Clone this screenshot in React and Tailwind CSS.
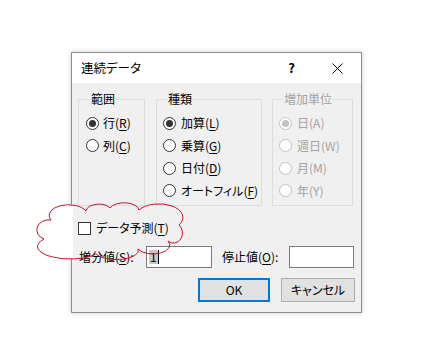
import React from 'react';

const font = { fontFamily: '"Noto Sans CJK JP", "Noto Sans", sans-serif' };

const Radio = ({ checked, disabled }) => (
  <span
    className={`w-[13px] h-[13px] shrink-0 rounded-full border flex items-center justify-center bg-white ${
      disabled ? 'border-[#c2c2c2]' : 'border-[#333333]'
    }`}
  >
    {checked && (
      <span className={`w-[7px] h-[7px] rounded-full ${disabled ? 'bg-[#c2c2c2]' : 'bg-[#333333]'}`} />
    )}
  </span>
);

const Option = ({ label, keyChar, checked, disabled, gap = 'gap-[4px]' }) => (
  <div className={`h-[22.5px] flex items-center whitespace-nowrap ${gap}`}>
    <Radio checked={checked} disabled={disabled} />
    <span className={disabled ? 'text-[#a3a3a3]' : 'text-black'}>
      {label}(
      {disabled ? keyChar : <span className="underline underline-offset-2">{keyChar}</span>})
    </span>
  </div>
);

const Group = ({ title, width, disabled, children, pad }) => (
  <fieldset className={`${width} h-[115px] border border-[#dcdcdc] ${pad}`}>
    <legend className={`ml-[4px] px-[1px] leading-[16px] ${disabled ? 'text-[#a3a3a3]' : 'text-black'}`}>
      {title}
    </legend>
    <div className="pt-[5px] flex flex-col">{children}</div>
  </fieldset>
);

export default function App() {
  return (
    <div
      className="w-[433px] h-[339px] bg-white relative overflow-hidden pt-[52px] pl-[71px] text-[12px] [font-feature-settings:'palt']"
      style={font}
    >
      {/* dialog */}
      <div className="w-[291px] h-[261px] border border-[#8e8e8e] shadow-[0_0_5px_rgba(0,0,0,0.2)] flex flex-col">
        {/* title bar */}
        <div className="h-[30px] bg-white flex items-center pl-[9px]">
          <span className="flex-1 text-[12.5px]">連続データ</span>
          <span className="font-bold text-[13px] mr-[37px]">?</span>
          <svg width="11" height="11" viewBox="0 0 11 11" className="mr-[18px]">
            <path d="M0.5 0.5 L10.5 10.5 M10.5 0.5 L0.5 10.5" stroke="#000" strokeWidth="1" />
          </svg>
        </div>

        {/* body */}
        <div className="flex-1 bg-[#f0f0f0] flex flex-col pt-[8px]">
          <div className="flex pl-[6px]">
            <Group title="範囲" width="w-[67px]" pad="pl-[7px]">
              <Option label="行" keyChar="R" checked />
              <Option label="列" keyChar="C" />
            </Group>
            <Group title="種類" width="w-[106px] ml-[11px]" pad="pl-[6px]">
              <Option label="加算" keyChar="L" checked gap="gap-[5px]" />
              <Option label="乗算" keyChar="G" gap="gap-[5px]" />
              <Option label="日付" keyChar="D" gap="gap-[5px]" />
              <Option label="オートフィル" keyChar="F" gap="gap-[5px]" />
            </Group>
            <Group title="増加単位" width="w-[81px] ml-[10px]" pad="pl-[6px]" disabled>
              <Option label="日" keyChar="A" checked disabled gap="gap-[5px]" />
              <Option label="週日" keyChar="W" disabled gap="gap-[5px]" />
              <Option label="月" keyChar="M" disabled gap="gap-[5px]" />
              <Option label="年" keyChar="Y" disabled gap="gap-[5px]" />
            </Group>
          </div>

          {/* checkbox */}
          <div className="h-[20px] mt-[12px] pl-[6px] flex items-center gap-[5px]">
            <span className="w-[13px] h-[13px] border border-[#333333] bg-white" />
            <span>
              データ予測(<span className="underline underline-offset-2">T</span>)
            </span>
          </div>

          {/* step / stop values */}
          <div className="h-[22px] mt-[8px] pl-[7px] flex items-center">
            <span className="w-[67px]">
              増分値(<span className="underline underline-offset-2">S</span>):
            </span>
            <div className="w-[66px] h-[22px] border border-[#7a7a7a] bg-white flex items-center pl-[2px]">
              <span className="bg-[#c8c8c8] leading-[14px] px-[1px]">1</span>
              <span className="w-[1px] h-[14px] bg-black" />
            </div>
            <span className="w-[67px] ml-[10px]">
              停止値(<span className="underline underline-offset-2">O</span>):
            </span>
            <div className="w-[65px] h-[22px] border border-[#7a7a7a] bg-white" />
          </div>

          {/* buttons */}
          <div className="mt-[10px] flex justify-end pr-[6px] gap-[11px]">
            <button className="w-[72px] h-[24px] border-2 border-[#0078d7] bg-[#e1e1e1] flex items-center justify-center">
              OK
            </button>
            <button className="w-[74px] h-[24px] border border-[#adadad] bg-[#e1e1e1] flex items-center justify-center">
              キャンセル
            </button>
          </div>
        </div>
      </div>

      {/* cloud annotation */}
      <svg className="absolute left-0 top-0 pointer-events-none" width="433" height="339" viewBox="0 0 433 339">
        <defs>
          <clipPath id="outside">
            <rect x="0" y="0" width="73" height="339" />
          </clipPath>
          <path
            id="cloud"
            d="M44 239 A12 10 0 0 1 51 220 A18 10 0 0 1 86 211 A13 8 0 0 1 110 208 A15 8 0 0 1 139 210 A21 12 0 0 1 179 225 A8 9 0 0 1 168 241 A15 8 0 0 1 138 249 A22 9 0 0 1 96 254 A26 10 0 0 1 44 239 Z"
          />
        </defs>
        <use href="#cloud" fill="#ffffff" clipPath="url(#outside)" />
        <use href="#cloud" fill="none" stroke="#c8102e" strokeWidth="1" />
      </svg>
    </div>
  );
}
